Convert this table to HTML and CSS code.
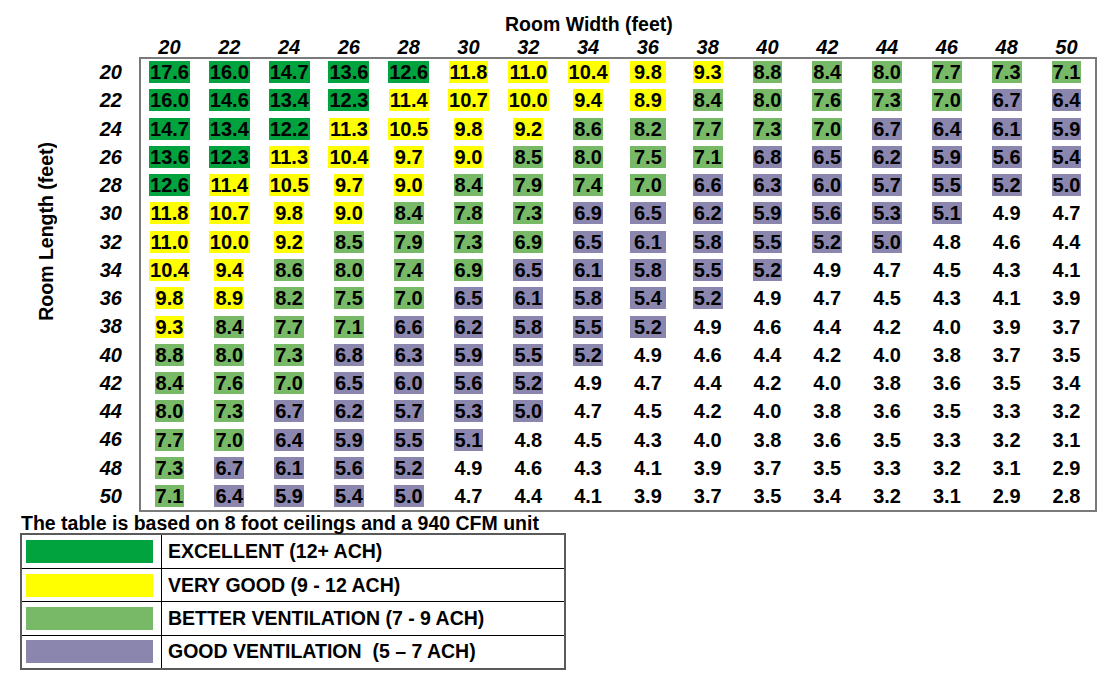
FILE: index.html
```html
<!DOCTYPE html>
<html>
<head>
<meta charset="utf-8">
<title>Room Ventilation Table</title>
<link rel="stylesheet" href="styles.css">
</head>
<body>
<div class="chart">
  <div class="title">Room Width (feet)</div>
  <div class="head">
    <span>20</span><span>22</span><span>24</span><span>26</span><span>28</span><span>30</span><span>32</span><span>34</span><span>36</span><span>38</span><span>40</span><span>42</span><span>44</span><span>46</span><span>48</span><span>50</span>
  </div>
  <div class="body">
    <div class="side">
      <div class="ylabel"><span class="ytext">Room Length (feet)</span></div>
      <div class="rowlabels">
        <div>20</div><div>22</div><div>24</div><div>26</div><div>28</div><div>30</div><div>32</div><div>34</div><div>36</div><div>38</div><div>40</div><div>42</div><div>44</div><div>46</div><div>48</div><div>50</div>
      </div>
    </div>
    <div class="frame">
      <div class="grid">
        <div class="row"><span class="c g">17.6</span><span class="c g">16.0</span><span class="c g">14.7</span><span class="c g">13.6</span><span class="c g">12.6</span><span class="c y">11.8</span><span class="c y">11.0</span><span class="c y">10.4</span><span class="c y">9.8</span><span class="c y">9.3</span><span class="c l">8.8</span><span class="c l">8.4</span><span class="c l">8.0</span><span class="c l">7.7</span><span class="c l">7.3</span><span class="c l">7.1</span></div>
        <div class="row"><span class="c g">16.0</span><span class="c g">14.6</span><span class="c g">13.4</span><span class="c g">12.3</span><span class="c y">11.4</span><span class="c y">10.7</span><span class="c y">10.0</span><span class="c y">9.4</span><span class="c y">8.9</span><span class="c l">8.4</span><span class="c l">8.0</span><span class="c l">7.6</span><span class="c l">7.3</span><span class="c l">7.0</span><span class="c p">6.7</span><span class="c p">6.4</span></div>
        <div class="row"><span class="c g">14.7</span><span class="c g">13.4</span><span class="c g">12.2</span><span class="c y">11.3</span><span class="c y">10.5</span><span class="c y">9.8</span><span class="c y">9.2</span><span class="c l">8.6</span><span class="c l">8.2</span><span class="c l">7.7</span><span class="c l">7.3</span><span class="c l">7.0</span><span class="c p">6.7</span><span class="c p">6.4</span><span class="c p">6.1</span><span class="c p">5.9</span></div>
        <div class="row"><span class="c g">13.6</span><span class="c g">12.3</span><span class="c y">11.3</span><span class="c y">10.4</span><span class="c y">9.7</span><span class="c y">9.0</span><span class="c l">8.5</span><span class="c l">8.0</span><span class="c l">7.5</span><span class="c l">7.1</span><span class="c p">6.8</span><span class="c p">6.5</span><span class="c p">6.2</span><span class="c p">5.9</span><span class="c p">5.6</span><span class="c p">5.4</span></div>
        <div class="row"><span class="c g">12.6</span><span class="c y">11.4</span><span class="c y">10.5</span><span class="c y">9.7</span><span class="c y">9.0</span><span class="c l">8.4</span><span class="c l">7.9</span><span class="c l">7.4</span><span class="c l">7.0</span><span class="c p">6.6</span><span class="c p">6.3</span><span class="c p">6.0</span><span class="c p">5.7</span><span class="c p">5.5</span><span class="c p">5.2</span><span class="c p">5.0</span></div>
        <div class="row"><span class="c y">11.8</span><span class="c y">10.7</span><span class="c y">9.8</span><span class="c y">9.0</span><span class="c l">8.4</span><span class="c l">7.8</span><span class="c l">7.3</span><span class="c p">6.9</span><span class="c p">6.5</span><span class="c p">6.2</span><span class="c p">5.9</span><span class="c p">5.6</span><span class="c p">5.3</span><span class="c p">5.1</span><span class="c">4.9</span><span class="c">4.7</span></div>
        <div class="row"><span class="c y">11.0</span><span class="c y">10.0</span><span class="c y">9.2</span><span class="c l">8.5</span><span class="c l">7.9</span><span class="c l">7.3</span><span class="c l">6.9</span><span class="c p">6.5</span><span class="c p">6.1</span><span class="c p">5.8</span><span class="c p">5.5</span><span class="c p">5.2</span><span class="c p">5.0</span><span class="c">4.8</span><span class="c">4.6</span><span class="c">4.4</span></div>
        <div class="row"><span class="c y">10.4</span><span class="c y">9.4</span><span class="c l">8.6</span><span class="c l">8.0</span><span class="c l">7.4</span><span class="c l">6.9</span><span class="c p">6.5</span><span class="c p">6.1</span><span class="c p">5.8</span><span class="c p">5.5</span><span class="c p">5.2</span><span class="c">4.9</span><span class="c">4.7</span><span class="c">4.5</span><span class="c">4.3</span><span class="c">4.1</span></div>
        <div class="row"><span class="c y">9.8</span><span class="c y">8.9</span><span class="c l">8.2</span><span class="c l">7.5</span><span class="c l">7.0</span><span class="c p">6.5</span><span class="c p">6.1</span><span class="c p">5.8</span><span class="c p">5.4</span><span class="c p">5.2</span><span class="c">4.9</span><span class="c">4.7</span><span class="c">4.5</span><span class="c">4.3</span><span class="c">4.1</span><span class="c">3.9</span></div>
        <div class="row"><span class="c y">9.3</span><span class="c l">8.4</span><span class="c l">7.7</span><span class="c l">7.1</span><span class="c p">6.6</span><span class="c p">6.2</span><span class="c p">5.8</span><span class="c p">5.5</span><span class="c p">5.2</span><span class="c">4.9</span><span class="c">4.6</span><span class="c">4.4</span><span class="c">4.2</span><span class="c">4.0</span><span class="c">3.9</span><span class="c">3.7</span></div>
        <div class="row"><span class="c l">8.8</span><span class="c l">8.0</span><span class="c l">7.3</span><span class="c p">6.8</span><span class="c p">6.3</span><span class="c p">5.9</span><span class="c p">5.5</span><span class="c p">5.2</span><span class="c">4.9</span><span class="c">4.6</span><span class="c">4.4</span><span class="c">4.2</span><span class="c">4.0</span><span class="c">3.8</span><span class="c">3.7</span><span class="c">3.5</span></div>
        <div class="row"><span class="c l">8.4</span><span class="c l">7.6</span><span class="c l">7.0</span><span class="c p">6.5</span><span class="c p">6.0</span><span class="c p">5.6</span><span class="c p">5.2</span><span class="c">4.9</span><span class="c">4.7</span><span class="c">4.4</span><span class="c">4.2</span><span class="c">4.0</span><span class="c">3.8</span><span class="c">3.6</span><span class="c">3.5</span><span class="c">3.4</span></div>
        <div class="row"><span class="c l">8.0</span><span class="c l">7.3</span><span class="c p">6.7</span><span class="c p">6.2</span><span class="c p">5.7</span><span class="c p">5.3</span><span class="c p">5.0</span><span class="c">4.7</span><span class="c">4.5</span><span class="c">4.2</span><span class="c">4.0</span><span class="c">3.8</span><span class="c">3.6</span><span class="c">3.5</span><span class="c">3.3</span><span class="c">3.2</span></div>
        <div class="row"><span class="c l">7.7</span><span class="c l">7.0</span><span class="c p">6.4</span><span class="c p">5.9</span><span class="c p">5.5</span><span class="c p">5.1</span><span class="c">4.8</span><span class="c">4.5</span><span class="c">4.3</span><span class="c">4.0</span><span class="c">3.8</span><span class="c">3.6</span><span class="c">3.5</span><span class="c">3.3</span><span class="c">3.2</span><span class="c">3.1</span></div>
        <div class="row"><span class="c l">7.3</span><span class="c p">6.7</span><span class="c p">6.1</span><span class="c p">5.6</span><span class="c p">5.2</span><span class="c">4.9</span><span class="c">4.6</span><span class="c">4.3</span><span class="c">4.1</span><span class="c">3.9</span><span class="c">3.7</span><span class="c">3.5</span><span class="c">3.3</span><span class="c">3.2</span><span class="c">3.1</span><span class="c">2.9</span></div>
        <div class="row"><span class="c l">7.1</span><span class="c p">6.4</span><span class="c p">5.9</span><span class="c p">5.4</span><span class="c p">5.0</span><span class="c">4.7</span><span class="c">4.4</span><span class="c">4.1</span><span class="c">3.9</span><span class="c">3.7</span><span class="c">3.5</span><span class="c">3.4</span><span class="c">3.2</span><span class="c">3.1</span><span class="c">2.9</span><span class="c">2.8</span></div>
      </div>
    </div>
  </div>
  <div class="note">The table is based on 8 foot ceilings and a 940 CFM unit</div>
  <div class="legend">
    <div class="sw-cell"><span class="swatch g"></span></div>
    <div class="lab">EXCELLENT (12+ ACH)</div>
    <div class="sw-cell"><span class="swatch y"></span></div>
    <div class="lab">VERY GOOD (9 - 12 ACH)</div>
    <div class="sw-cell"><span class="swatch l"></span></div>
    <div class="lab">BETTER VENTILATION (7 - 9 ACH)</div>
    <div class="sw-cell last"><span class="swatch p"></span></div>
    <div class="lab last">GOOD VENTILATION  (5 – 7 ACH)</div>
  </div>
</div>
</body>
</html>
```
FILE: styles.css
```css
* { box-sizing: border-box; }

body {
  margin: 0;
  background: #ffffff;
  color: #000000;
  font-family: "Liberation Sans", Arial, sans-serif;
  font-weight: bold;
  width: 1104px;
  height: 676px;
  overflow: hidden;
}

.chart { padding-top: 13px; }

.title {
  margin-left: 505px;
  font-size: 19.5px;
  line-height: 22px;
  height: 22px;
  white-space: nowrap;
}

.head {
  display: grid;
  grid-template-columns: repeat(16, 59.8px);
  margin-left: 139.6px;
  padding-top: 2px;
  height: 22px;
  line-height: 20px;
  font-size: 20px;
  font-style: italic;
  text-align: center;
}

.body { display: flex; }

.side {
  width: 139px;
  display: flex;
  flex: none;
}

.ylabel { width: 92px; }

.ytext {
  display: block;
  writing-mode: vertical-rl;
  transform: rotate(180deg);
  margin-left: 35px;
  margin-top: 85px;
  width: 22px;
  line-height: 22px;
  font-size: 19.5px;
  white-space: nowrap;
}

.rowlabels {
  width: 30px;
  padding-top: 1px;
  font-size: 20px;
  font-style: italic;
  text-align: right;
}

.rowlabels div {
  height: 28.27px;
  line-height: 28.27px;
}

.frame {
  width: 958px;
  border: 2px solid #7a7a7a;
  flex: none;
}

.grid { margin: -1px 0 0 -1.4px; }

.row {
  display: grid;
  grid-template-columns: repeat(16, 59.8px);
  height: 28.27px;
  align-items: center;
  justify-items: center;
}

.c {
  height: 22px;
  line-height: 22px;
  padding: 0 1px;
  font-size: 20px;
  white-space: nowrap;
}

.row > .c:nth-child(9) { padding: 0 4px; }

.g { background: #00a33e; }
.y { background: #ffff00; }
.l { background: #77b966; }
.p { background: #8b86ae; }

.note {
  margin-left: 21px;
  font-size: 19.5px;
  line-height: 22px;
  white-space: nowrap;
}

.legend {
  margin: -1px 0 0 20px;
  width: 546px;
  border: 2px solid #5a5a5a;
  display: grid;
  grid-template-columns: 140px 1fr;
  font-size: 19.5px;
}

.sw-cell {
  height: 33.5px;
  border-right: 1px solid #000;
  border-bottom: 1px solid #000;
  padding-left: 4px;
  display: flex;
  align-items: center;
}

.lab {
  height: 33.5px;
  border-bottom: 1px solid #000;
  padding-left: 6px;
  display: flex;
  align-items: center;
  white-space: pre;
}

.sw-cell.last, .lab.last {
  height: 32px;
  border-bottom: none;
}

.swatch {
  display: block;
  width: 127px;
  height: 23px;
}
```
